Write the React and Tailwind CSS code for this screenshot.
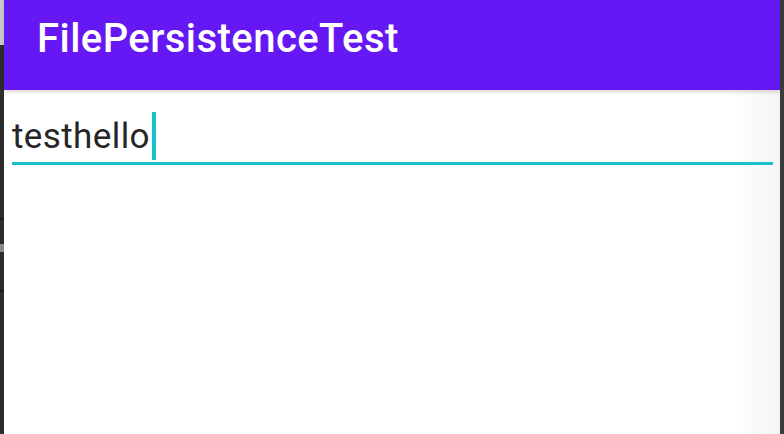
import React from 'react';

const App = () => {
    return (
        <div
            className="flex h-[434px] w-[784px] overflow-hidden bg-white"
            style={{ fontFamily: 'Roboto, "Noto Sans", sans-serif' }}
        >
            {/* left edge of the emulator window */}
            <div className="flex w-[4px] flex-col">
                <div className="h-[45px] bg-[#cbcbcb]" />
                <div className="h-[173px] bg-[#2d2d2d]" />
                <div className="h-[2px] bg-[#1b1b1b]" />
                <div className="h-[24px] bg-[#2d2d2d]" />
                <div className="h-[8px] bg-[#8a8a8a]" />
                <div className="h-[38px] bg-[#2d2d2d]" />
                <div className="h-[2px] bg-[#1b1b1b]" />
                <div className="flex-1 bg-[#2d2d2d]" />
            </div>

            <main className="flex flex-1 flex-col bg-[linear-gradient(to_right,#ffffff_94%,#f4f4f4)]">
                <header className="flex h-[90px] items-center bg-[#6518f4] pl-[33px] pb-[12px] shadow-[0_2px_4px_rgba(0,0,0,0.16)]">
                    <h1 className="text-[40px] font-medium leading-none tracking-[0.45px] text-white">
                        FilePersistenceTest
                    </h1>
                </header>

                <section className="pl-[8px] pr-[7px] pt-[19px]">
                    <div className="flex h-[53px] items-center">
                        <span className="pt-[2px] text-[35px] leading-none tracking-[0.4px] text-[#262626]">
                            testhello
                        </span>
                        <span className="ml-[2px] h-[48px] w-[4px] bg-[#16c2cc]" />
                    </div>
                    <div className="h-[3px] bg-[#1ac0cc]" />
                </section>
            </main>

            {/* right edge */}
            <div className="w-[4px] bg-[#3a3a3a]" />
        </div>
    );
};

export default App;
